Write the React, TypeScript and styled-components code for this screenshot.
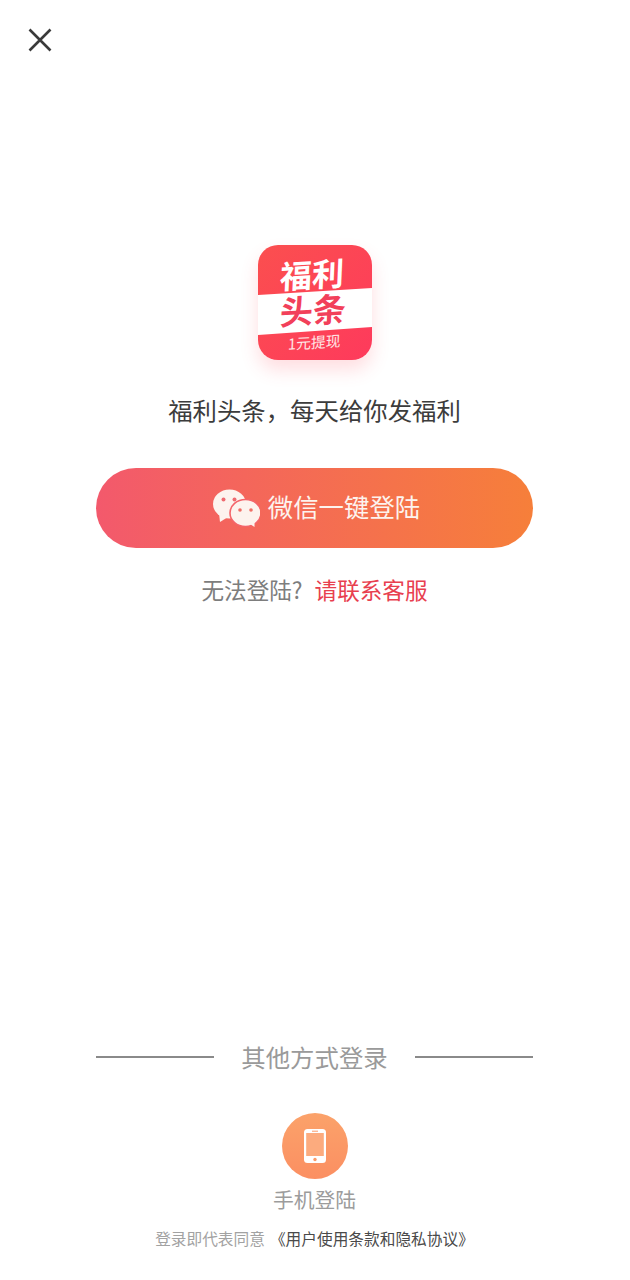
import styled, { createGlobalStyle } from "styled-components";

const GlobalStyle = createGlobalStyle`
  html, body {
    margin: 0;
    padding: 0;
    background: #fff;
  }
  * {
    box-sizing: border-box;
  }
`;

const Page = styled.div`
  width: 630px;
  height: 1280px;
  padding-right: 1px;
  display: flex;
  flex-direction: column;
  align-items: center;
  overflow: hidden;
  background: #fff;
  font-family: "Noto Sans CJK SC", "Noto Sans", sans-serif;
`;

const TopBar = styled.div`
  width: 100%;
  height: 245px;
  padding: 27px 0 0 27px;
`;

const CloseButton = styled.div`
  width: 26px;
  height: 26px;
  color: #3a3a3a;
`;

const Logo = styled.div`
  position: relative;
  width: 114px;
  height: 115px;
  flex-shrink: 0;
  border-radius: 20px;
  margin-left: 1px;
  background: linear-gradient(135deg, #fb4f4f 0%, #fe3a5c 100%);
  box-shadow: 0 10px 18px rgba(254, 70, 90, 0.18);
`;

const LogoBand = styled.div`
  position: absolute;
  left: 0;
  right: 0;
  top: 43px;
  height: 47px;
  background: #fff;
  clip-path: polygon(0 7px, 100% 0, 100% 39px, 0 47px);
`;

const LogoText = styled.span<{ $top: number; $left: number; $size: number; $color: string; $weight: number }>`
  position: absolute;
  top: ${(p) => p.$top}px;
  left: ${(p) => p.$left}px;
  font-size: ${(p) => p.$size}px;
  line-height: 1;
  font-weight: ${(p) => p.$weight};
  color: ${(p) => p.$color};
  white-space: nowrap;
  transform: rotate(-3.5deg) skewX(-6deg);
`;

const Tagline = styled.div`
  margin-top: 32px;
  font-size: 24.4px;
  line-height: 36px;
  color: #3c3c3c;
  white-space: nowrap;
`;

const WechatButton = styled.div`
  margin-top: 40px;
  width: 437px;
  height: 80px;
  border-radius: 40px;
  display: flex;
  align-items: center;
  justify-content: center;
  gap: 8px;
  padding-left: 4px;
  background: linear-gradient(90deg, #f3596c 0%, #f67f3a 100%);
  color: #fdf3ee;
  font-size: 25.4px;
`;

const WechatLabel = styled.span`
  margin-top: -4px;
`;

const WechatIcon = styled.svg`
  width: 47px;
  height: 38px;
  flex-shrink: 0;
`;

const HelpRow = styled.div`
  margin-top: 24px;
  font-size: 22.6px;
  line-height: 36px;
  color: #7d7d7d;
  white-space: nowrap;
`;

const HelpLink = styled.span`
  margin-left: 12px;
  color: #e8404f;
`;

const Other = styled.div`
  margin-top: auto;
  width: 437px;
  display: flex;
  align-items: center;
  justify-content: space-between;
  color: #9a9a9a;
  font-size: 24.4px;
  line-height: 36px;
`;

const OtherLine = styled.div`
  width: 118px;
  height: 2px;
  background: #8a8a8a;
  margin-top: -1px;
`;

const PhoneCircle = styled.div`
  margin-top: 38px;
  width: 66px;
  height: 66px;
  border-radius: 50%;
  display: flex;
  align-items: center;
  justify-content: center;
  background: linear-gradient(180deg, #fba26a 0%, #fb8f62 100%);
`;

const PhoneIcon = styled.svg`
  width: 22px;
  height: 34px;
`;

const PhoneLabel = styled.div`
  margin-top: 5px;
  font-size: 20.8px;
  line-height: 30px;
  color: #9c9c9c;
`;

const Terms = styled.div`
  margin: 13px 0 29px;
  display: flex;
  gap: 5px;
  font-size: 15.7px;
  line-height: 24px;
  color: #a2a2a2;
  white-space: nowrap;
`;

const TermsLink = styled.span`
  color: #4a4a4a;
`;

const App = () => {
  return (
    <Page>
      <GlobalStyle />
      <TopBar>
        <CloseButton>
          <svg width="26" height="26" viewBox="0 0 26 26" fill="none" stroke="currentColor" strokeWidth="2.6">
            <path d="M2.5 2.5 L23.5 23.5 M23.5 2.5 L2.5 23.5" />
          </svg>
        </CloseButton>
      </TopBar>

      <Logo>
        <LogoBand />
        <LogoText $top={12} $left={22} $size={32} $color="#fff" $weight={700}>
          福利
        </LogoText>
        <LogoText $top={48} $left={22} $size={33} $color="#f2405a" $weight={700}>
          头条
        </LogoText>
        <LogoText $top={90} $left={30} $size={14.8} $color="#ffe6e6" $weight={400}>
          1元提现
        </LogoText>
      </Logo>

      <Tagline>福利头条，每天给你发福利</Tagline>

      <WechatButton>
        <WechatIcon viewBox="0 0 47 38">
          <ellipse cx="16.5" cy="15" rx="16.5" ry="14.5" fill="#fdf3ee" />
          <path d="M6 24 L7 33 L15 28 Z" fill="#fdf3ee" />
          <ellipse cx="32.5" cy="24" rx="15.5" ry="13.5" stroke="#f4656a" strokeWidth="1.6" fill="#fdf3ee" />
          <path d="M37 35 L41.5 38 L41.5 32 Z" fill="#fdf3ee" />
          <circle cx="10.5" cy="10.5" r="2" fill="#ef6a70" />
          <circle cx="21.5" cy="10.5" r="2" fill="#ef6a70" />
          <circle cx="27" cy="21" r="1.8" fill="#f06f66" />
          <circle cx="38" cy="21" r="1.8" fill="#f06f66" />
        </WechatIcon>
        <WechatLabel>微信一键登陆</WechatLabel>
      </WechatButton>

      <HelpRow>
        无法登陆?<HelpLink>请联系客服</HelpLink>
      </HelpRow>

      <Other>
        <OtherLine />
        其他方式登录
        <OtherLine />
      </Other>

      <PhoneCircle>
        <PhoneIcon viewBox="0 0 22 34">
          <rect x="0" y="0" width="22" height="34" rx="3.5" fill="#fff" />
          <rect x="2.2" y="4" width="17.6" height="23" fill="#fcab7e" />
          <circle cx="11" cy="30.5" r="1.7" fill="#fb9a68" />
          <rect x="8" y="1.7" width="6" height="1" fill="#fb9a68" />
        </PhoneIcon>
      </PhoneCircle>
      <PhoneLabel>手机登陆</PhoneLabel>

      <Terms>
        登录即代表同意
        <TermsLink>《用户使用条款和隐私协议》</TermsLink>
      </Terms>
    </Page>
  );
};

export default App;
